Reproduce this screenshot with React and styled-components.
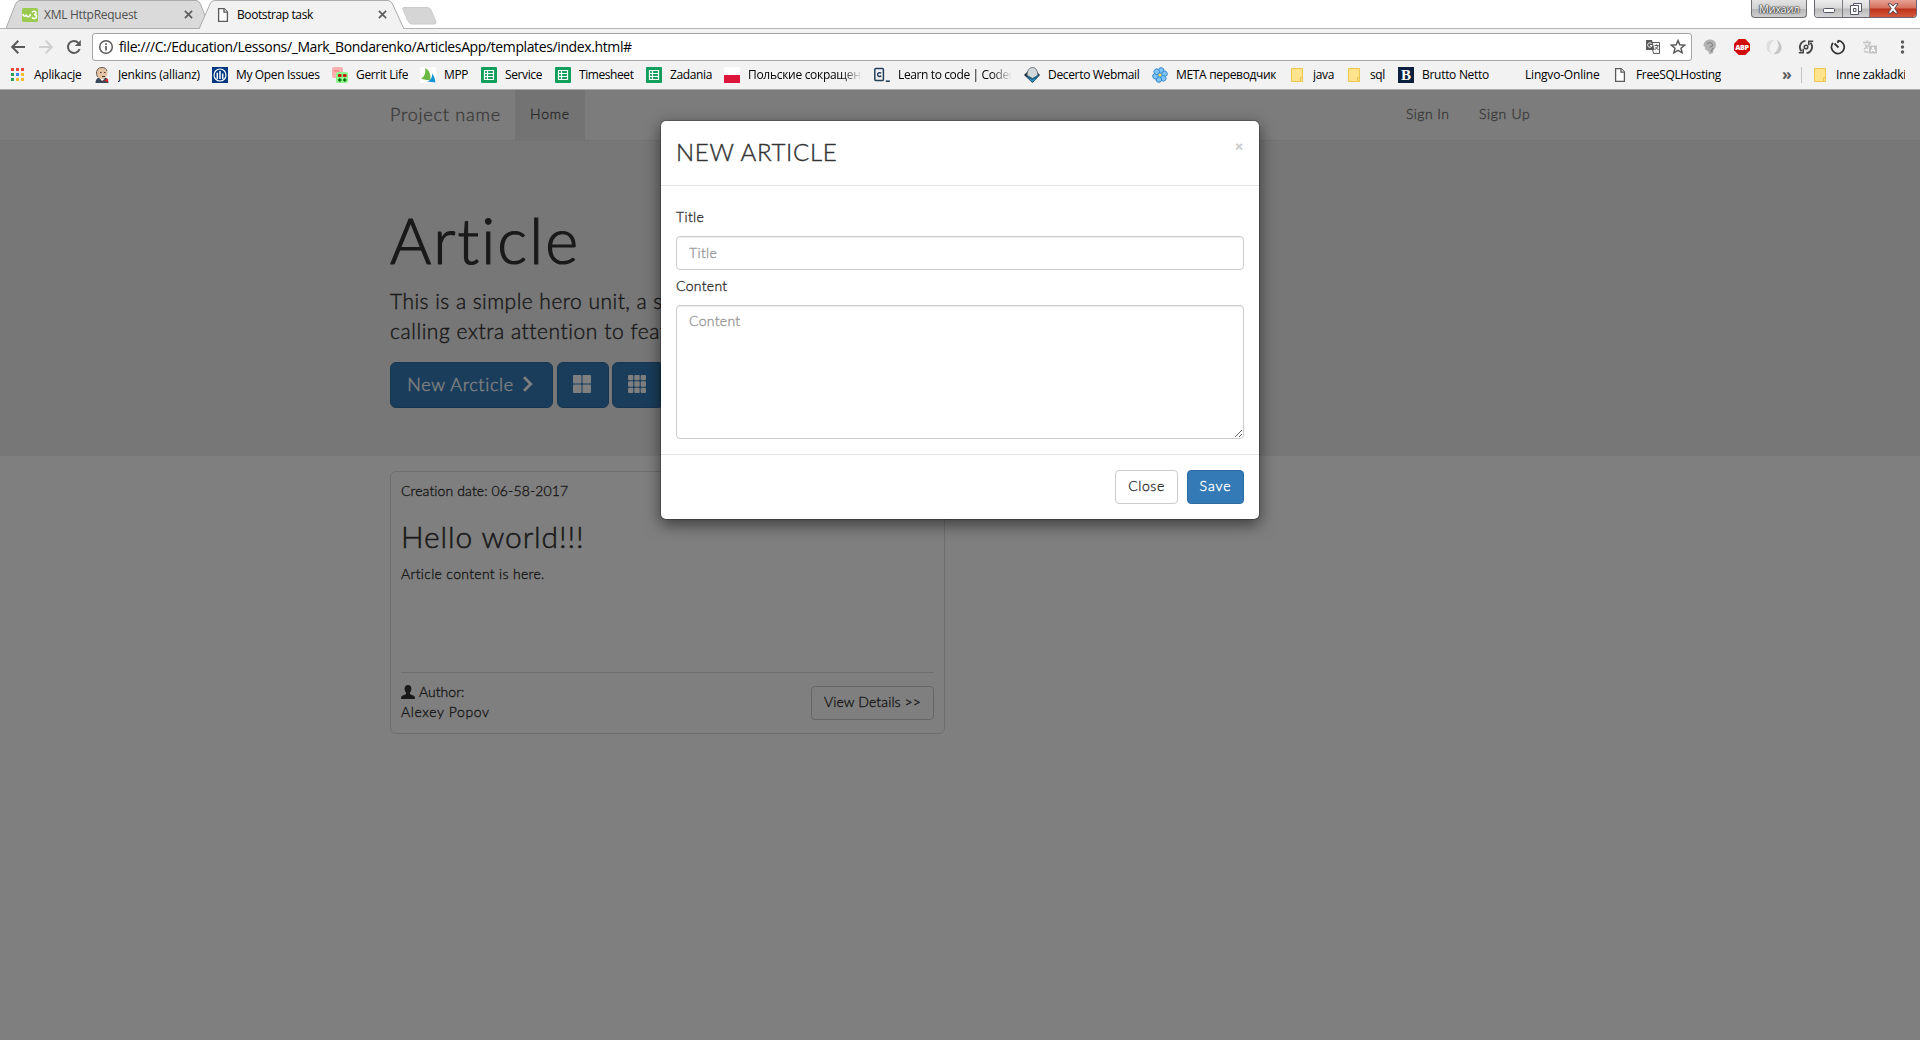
import React from "react";
import styled, { createGlobalStyle, css } from "styled-components";

const Global = createGlobalStyle`
  *, *::before, *::after { box-sizing: border-box; }
  body { margin: 0; background: #fff; overflow: hidden; }
  button, input, textarea { font: inherit; margin: 0; }
  svg { display: block; flex: none; }
`;

const chromeFont = css`font-family: "Open Sans", "Noto Sans", sans-serif;`;
const pageFont = css`font-family: Lato, "Open Sans", sans-serif; font-weight: 300;`;

const Window = styled.div`
  width: 1920px; height: 1040px; display: flex; flex-direction: column; overflow: hidden;
`;

/* ---------- browser chrome ---------- */
const Chrome = styled.header`
  ${chromeFont}
  height: 90px; flex: none; background: #f2f2f2; border-bottom: 1px solid #a9a9a9;
  font-size: 12px; color: #000; display: flex; flex-direction: column;
`;
const TabStrip = styled.div`
  height: 29px; flex: none; background: #fff; border-bottom: 1px solid #b6b6b6;
  display: flex; justify-content: space-between; align-items: flex-start;
`;
const Tabs = styled.div`display: flex; padding-left: 6px;`;
const Tab = styled.div`
  position: relative; isolation: isolate; width: ${p => p.$w}px; height: 29px; flex: none;
  margin-right: -11px; padding: 0 ${p => p.$pr}px 0 16px;
  display: flex; align-items: center; color: ${p => (p.$active ? "#000" : "#505050")};
  z-index: ${p => (p.$active ? 2 : 1)};
`;
const TabShape = styled.svg`position: absolute; left: 0; top: 0; z-index: -1;`;
const TabTitle = styled.span`
  flex: 1; margin-left: ${p => p.$gap}px; letter-spacing: ${p => p.$ls}px; white-space: nowrap;
`;
const NewTab = styled.svg`margin: 7px 0 0 8px;`;
const WindowTools = styled.div`display: flex; padding-right: 3px; gap: 7px;`;
const UserButton = styled.div`
  width: 56px; height: 18px; border: 1px solid #6e6e6e; border-top: 0; border-radius: 0 0 4px 4px;
  background: linear-gradient(#e3e3e3, #d2d2d2 50%, #b7b7b7 52%, #cfcfcf);
  font-size: 11px; line-height: 17px; text-align: center; color: #fff; letter-spacing: -0.3px;
  text-shadow: 0 0 1px #333, 0 0 1px #333, 0 0 2px #444, 0 0 2px #444;
`;
const Controls = styled.div`
  display: flex; height: 18px; border: 1px solid #6b6570; border-top: 0; border-radius: 0 0 4px 4px; overflow: hidden;
`;
const Control = styled.div`
  width: ${p => p.$w}px; display: flex; align-items: center; justify-content: center;
  border-left: ${p => (p.$first ? 0 : "1px solid #7d7a83")};
  background: ${p => p.$close
    ? "linear-gradient(#e6a195, #d4705c 48%, #bd3119 52%, #d4583c)"
    : "linear-gradient(#ececec, #d9d9d9 48%, #b9b9b9 52%, #d4d4d4)"};
  svg { margin-top: ${p => p.$drop || 0}px; }
`;
const Toolbar = styled.div`
  height: 32px; flex: none; padding: 4px 0 0 10px; display: flex; align-items: flex-start;
`;
const NavIcons = styled.div`display: flex; gap: 12px; height: 28px; align-items: center; width: 82px;`;
const Omnibox = styled.div`
  width: 1600px; height: 28px; border: 1px solid #a6a6a6; border-radius: 3px; background: #fff;
  display: flex; align-items: center; padding: 0 5px;
`;
const Url = styled.span`
  flex: 1; margin-left: 5px; font-size: 14px; letter-spacing: -0.383px; white-space: nowrap; padding-bottom: 1px;
`;
const Extensions = styled.div`
  display: flex; height: 28px; align-items: center; margin-left: 10px; gap: 16px;
`;
const Bookmarks = styled.div`
  height: 28px; display: flex; align-items: center; padding: 0 15px 0 10px;
`;
const Bookmark = styled.div`
  width: ${p => p.$w}px; flex: none; display: flex; align-items: center; gap: 8px;
`;
const BookmarkLabel = styled.span`
  white-space: nowrap; overflow: hidden; line-height: 18px; letter-spacing: ${p => p.$ls}px;
  ${p => p.$fade && css`width: 114px; mask-image: linear-gradient(90deg, #000 82%, transparent);`}
`;
const More = styled.span`
  margin-left: auto; width: 19px; font-size: 16px; font-weight: 700; color: #5a5a5a; line-height: 16px; padding-bottom: 3px;
`;
const Divider = styled.span`width: 1px; height: 16px; background: #c3c3c3; margin-right: 10px;`;

/* ---------- page ---------- */
const Page = styled.main`
  ${pageFont}
  position: relative; flex: 1; overflow: hidden; background: #fff; color: #333;
  font-size: 14px; line-height: 20px; -webkit-text-stroke: 0.35px currentColor;
`;
const T = styled.span`letter-spacing: ${p => p.$ls}px; white-space: nowrap;`;
const Navbar = styled.nav`height: 51px; background: #f8f8f8; border-bottom: 1px solid #e7e7e7;`;
const Container = styled.div`width: 1170px; margin: 0 auto; padding: 0 15px;`;
const NavRow = styled(Container)`display: flex; height: 50px; line-height: 48px; color: #777;`;
const Brand = styled.div`font-size: 18px; width: 125px;`;
const NavItem = styled.div`
  padding: 0 15px; background: ${p => (p.$active ? "#e7e7e7" : "none")};
  color: ${p => (p.$active ? "#555" : "#777")}; ${p => p.$w && `width: ${p.$w}px;`}
`;
const NavRight = styled.div`margin-left: auto; display: flex; margin-right: -16px;`;
const Jumbotron = styled.section`height: 315px; background: #eee; padding-top: 64px;`;
const Hero = styled.h1`
  margin: 0; font-size: 63px; font-weight: 300; line-height: 69px; letter-spacing: 2.1px; -webkit-text-stroke: 1.2px currentColor;
`;
const Lead = styled.p`margin: 12px 0 16px; font-size: 21px; line-height: 30px; -webkit-text-stroke: 0.4px currentColor;`;
const HeroButtons = styled.div`display: flex; gap: 4px;`;
const BigButton = styled.button`
  height: 46px; width: ${p => p.$w}px; padding: 0 2px 3px 0; border: 1px solid #2e6da4; border-radius: 6px;
  margin-left: ${p => p.$pull || 0}px;
  background: #337ab7; color: #fff; font-size: 18px; display: flex; align-items: center; justify-content: center; gap: 8px;
  -webkit-text-stroke: 0.4px currentColor;
`;
const Card = styled.article`
  width: 555px; height: 263px; margin-top: 15px; padding: 9px 10px 10px; border: 1px solid #ddd; border-radius: 6px;
  display: flex; flex-direction: column;
`;
const CardTitle = styled.h2`
  margin: 19px 0 11px; font-size: 30px; font-weight: 300; line-height: 33px; letter-spacing: 0.85px; -webkit-text-stroke: 0.5px currentColor;
`;
const CardBody = styled.div`flex: 1;`;
const CardFooter = styled.footer`
  height: 51px; border-top: 1px solid #ddd; padding-top: 9px; display: flex; justify-content: space-between;
`;
const Author = styled.div`display: flex; flex-direction: column;`;
const AuthorRow = styled.div`display: flex; gap: 4px; height: 20px; svg { margin-top: 3px; }`;
const Button = styled.button`
  height: 34px; width: ${p => p.$w}px; margin-top: ${p => p.$mt || 0}px; padding: 0 0 2px; border-radius: 4px; line-height: 20px;
  border: 1px solid ${p => (p.$primary ? "#2e6da4" : "#ccc")};
  background: ${p => (p.$primary ? "#337ab7" : "#fff")}; color: ${p => (p.$primary ? "#fff" : "#333")};
  -webkit-text-stroke: 0.35px currentColor;
`;

/* ---------- modal ---------- */
const Backdrop = styled.div`position: absolute; inset: 0; background: rgba(0, 0, 0, 0.5);`;
const Overlay = styled.div`
  position: absolute; inset: 0; display: flex; justify-content: center; align-items: flex-start; padding-top: 30px;
`;
const Dialog = styled.div`
  width: 600px; height: 400px; border: 1px solid rgba(0, 0, 0, 0.2); border-radius: 6px; background: #fff;
  background-clip: padding-box; box-shadow: 0 5px 15px rgba(0, 0, 0, 0.5);
`;
const DialogHeader = styled.div`
  height: 65px; border-bottom: 1px solid #e5e5e5; padding: 14px 15px; display: flex; justify-content: space-between;
`;
const DialogTitle = styled.h3`
  margin: 0; font-size: 24px; font-weight: 300; line-height: 33px; letter-spacing: 0.7px; -webkit-text-stroke: 0.4px currentColor;
`;
const CloseX = styled.span`
  font-size: 14px; font-weight: 900; color: #ccc; line-height: 21px; margin-right: 1px; -webkit-text-stroke: 0.3px #ccc;
`;
const DialogBody = styled.form`height: 268px; padding: 21px 15px 15px; display: flex; flex-direction: column;`;
const Label = styled.label`height: 20px; margin-bottom: 9px; letter-spacing: ${p => p.$ls}px;`;
const field = css`
  width: 568px; border: 1px solid #ccc; border-radius: 4px; padding: 5px 12px 7px; background: #fff; outline: 0;
  box-shadow: inset 0 1px 1px rgba(0, 0, 0, 0.075); color: #555; line-height: 20px; letter-spacing: ${p => p.$ls}px;
  &::placeholder { color: #999; opacity: 1; }
`;
const Input = styled.input`${field} height: 34px; margin-bottom: 6px;`;
const TextArea = styled.textarea`${field} height: 134px; resize: vertical; display: block;`;
const DialogFooter = styled.div`
  border-top: 1px solid #e5e5e5; padding: 15px; display: flex; justify-content: flex-end; gap: 9px;
`;

/* ---------- icons ---------- */
const FileIcon = () => (
  <svg width="16" height="16" viewBox="0 0 16 16" fill="#fff" stroke="#5a5a5a" strokeWidth="1.3">
    <path d="M3.6 1.6h5.6l3.2 3.4v9.4H3.6z" /><path d="M9 1.8v3.4h3.3" />
  </svg>
);
const CloseIcon = () => (
  <svg width="9" height="9" viewBox="0 0 10 10" stroke="#5e5e5e" strokeWidth="1.9"><path d="M1 1l8 8M9 1L1 9" /></svg>
);
const W3Icon = () => (
  <svg width="16" height="14" viewBox="0 0 16 14"><rect width="16" height="14" rx="1.5" fill="#9acb4e" />
    <path d="M.8 6c.8 3 2.800 3 3.400.6.700 2.800 3.300 3 4.500-.6M10 4.300c1-1.800 4-1.300 4 .5 0 1.200-1 1.700-2 1.700 1.500 0 2.500.8 2.500 2.200 0 2-3.500 2.600-4.500.6" fill="none" stroke="#fff" strokeWidth="1.500" /></svg>
);
const BackIcon = ({ c, flip }) => (
  <svg width="16" height="16" viewBox="0 0 16 16" fill="none" stroke={c} strokeWidth="2" transform={flip ? "scale(-1 1)" : undefined}>
    <path d="M15 8H2.500M8.300 1.800L2.200 8l6.100 6.200" />
  </svg>
);
const ReloadIcon = () => (
  <svg width="16" height="16" viewBox="0 0 16 16" fill="none" stroke="#5a5a5a" strokeWidth="2">
    <path d="M13.600 10A6 6 0 1 1 12.400 3.900" /><path d="M14.800 1v6H8.800z" fill="#5a5a5a" stroke="none" />
  </svg>
);
const InfoIcon = () => (
  <svg width="16" height="16" viewBox="0 0 16 16" fill="none" stroke="#5a5a5a"><circle cx="8" cy="8" r="6.300" strokeWidth="1.500" />
    <path d="M8 7v4.500M8 4.300v1.600" strokeWidth="1.700" /></svg>
);
const TranslateIcon = ({ c = "#5a5a5a" }) => (
  <svg width="16" height="16" viewBox="0 0 16 16">
    <path d="M6 3.500h8.500v11H8.500z" fill="#f5f5f5" stroke={c} />
    <path d="M1 1h6l2.600 10H1z" fill={c} />
    <path d="M6.600 4.700A2.200 2.200 0 1 0 7 6.500H5" fill="none" stroke="#fff" />
    <path d="M9.500 6.500h4M11.500 5.500v1M13 6.500c-.5 2-1.500 3-3 4M10.500 8l3 3" fill="none" stroke={c} />
  </svg>
);
const StarIcon = () => (
  <svg width="16" height="16" viewBox="0 0 16 16" fill="none" stroke="#5a5a5a" strokeWidth="1.500">
    <path d="M8 1.500l1.800 4.300 4.700.4-3.500 3 1.100 4.600L8 11.400l-4.100 2.400L5 9.200l-3.500-3 4.700-.4z" />
  </svg>
);
const HeadIcon = () => (
  <svg width="16" height="16" viewBox="0 0 16 16"><path d="M8 .5c4 0 6 2.500 6 5.500 0 2.500-1.500 4-2.500 5l-.5 3-3.500 1.500L6 12 3 10.500l.3-2L1.500 7C1.800 3 4 .5 8 .5z" fill="#b3b3b3" />
    <path d="M5 5c1-2 5-2 5.500.5.3 1.500-1 2.500-3 2.500M11 9l-2 4" fill="none" stroke="#878787" strokeWidth="1.200" /></svg>
);
const AbpIcon = () => (
  <svg width="16" height="16" viewBox="0 0 16 16"><path d="M4.700 0h6.600L16 4.700v6.600L11.300 16H4.700L0 11.300V4.700z" fill="#d10a0a" />
    <text x="8" y="10.700" fontFamily="Open Sans" fontSize="7.200" fontWeight="800" fill="#fff" textAnchor="middle" letterSpacing="-.3">ABP</text></svg>
);
const SwirlIcon = () => (
  <svg width="16" height="16" viewBox="0 0 16 16"><path d="M8.500 .8C3 0 0 4 .5 8.500 1 12 3 14 5.500 15 3.500 12 3 10 4 7c.8-2.500 2.500-4 4.500-6.200z" fill="#dedede" />
    <path d="M7.500 15.200C13 16 16 12 15.500 7.500 15 4 13 2 10.500 1c2 3 2.500 5 1.500 8-.8 2.500-2.500 4-4.500 6.200z" fill="#c6c6c6" /></svg>
);
const SyncIcon = () => (
  <svg width="16" height="16" viewBox="0 0 16 16" fill="none" stroke="#484848" strokeWidth="1.900">
    <path d="M7.500 1.900A6.200 6.200 0 0 0 3.600 12.300M8.500 14.100A6.200 6.200 0 0 0 12.400 3.700" />
    <path d="M.8 13.700h4.400V9.800M15.200 2.300h-4.400v3.900" strokeWidth="1.600" /><circle cx="8" cy="8" r="1.800" strokeWidth="1.500" />
  </svg>
);
const ClockIcon = () => (
  <svg width="16" height="16" viewBox="0 0 16 16" fill="none" stroke="#333"><path d="M8 1.500V4M8 1.700A6.400 6.400 0 1 1 3 3.900" strokeWidth="1.700" />
    <path d="M4.500 4.500L8.500 8.500" strokeWidth="1.800" /></svg>
);
const GrayTranslate = () => (
  <svg width="16" height="16" viewBox="0 0 16 16" fill="none" stroke="#c4c4c4" strokeWidth="1.400"><path d="M1 3.500h8M5 1.500v2M8 3.500c-1 3.500-3 5-6 6.500M3 5.500l3 4M2.500 12.500v-1M2.500 13h4" />
    <rect x="7" y="6.500" width="8" height="8" fill="#c4c4c4" stroke="none" /><path d="M9 13l2-5 2 5M9.700 11.500h2.600" stroke="#fff" strokeWidth="1" /></svg>
);
const DotsIcon = () => (
  <svg width="16" height="16" viewBox="0 0 16 16" fill="#5a5a5a"><circle cx="8.500" cy="3" r="1.700" /><circle cx="8.500" cy="8" r="1.700" /><circle cx="8.500" cy="13" r="1.700" /></svg>
);
const AppsIcon = () => {
  const colors = ["#e8453c", "#e8453c", "#e8453c", "#2f9e58", "#4285f4", "#f9bb2d", "#2f9e58", "#f9bb2d", "#f9bb2d"];
  return (
    <svg width="16" height="16" viewBox="0 0 16 16">
      {colors.map((c, i) => <rect key={i} x={1 + (i % 3) * 5} y={1 + Math.floor(i / 3) * 5} width="3" height="3" fill={c} />)}
    </svg>
  );
};
const JenkinsIcon = () => (
  <svg width="16" height="16" viewBox="0 0 16 16"><path d="M1.500 16c0-3 1.500-5.500 4-5.500h5c2.500 0 4 2.500 4 5.500z" fill="#39495a" />
    <path d="M5.500 11l2.500 3 3-2.500z" fill="#fff" /><ellipse cx="8" cy="6" rx="5.500" ry="6" fill="#e3c3a3" /><path d="M3.500 10C.8 4 4 .5 8 .5c2.500 0 4.500 1 5 3.500" fill="none" stroke="#6b5a50" />
    <path d="M6 5.500h1.500M10 5.500h1.500M8 9.500h3" stroke="#4b3a30" /><path d="M8 14.500l2-1.500 4 2.500v-4l-4 2z" fill="#d22" /></svg>
);
const AllianzIcon = () => (
  <svg width="16" height="16" viewBox="0 0 16 16" fill="none" stroke="#fff"><rect width="16" height="16" fill="#003781" stroke="none" />
    <circle cx="8" cy="8" r="6" strokeWidth="1.200" /><path d="M8 4v8M5.300 12V6.500H4.500M10.700 12V6.500" strokeWidth="1.500" /></svg>
);
const GerritIcon = () => (
  <svg width="16" height="16" viewBox="0 0 16 16"><rect width="11" height="11" rx="2" fill="#ffb0b0" /><path d="M2 4h5" stroke="#ff8f8f" strokeWidth="2" />
    <rect x="4" y="5" width="12" height="11" rx="2" fill="#8dfc8d" /><path d="M6 8.500h3.500M11 8.500h3.500" stroke="#c00" strokeWidth="2.400" />
    <path d="M6 13h3.500M11 13h3.500M7.700 11.300v3.400M12.700 11.300v3.400" stroke="#0a6b0a" strokeWidth="1.500" /></svg>
);
const MppIcon = () => (
  <svg width="16" height="16" viewBox="0 0 16 16"><rect width="16" height="16" fill="#fff" />
    <path d="M5 1c3.500 1.500 6 5 5.500 11.500C8 13.500 5 13 1 11.500 4.500 10 6 6 5 1z" fill="#6cb944" />
    <path d="M12 6.500c2 2 3 5 3.500 9-3.500-.5-6-.5-8.500-1 3.500-1 5.500-4 5-8z" fill="#1596d4" /></svg>
);
const SheetIcon = () => (
  <svg width="16" height="16" viewBox="0 0 16 16"><rect width="16" height="16" rx="1" fill="#129f5c" />
    <path d="M3.500 3.500h9v9h-9zM3.500 6.500h9M3.500 9.500h9M6.500 3.500v9" fill="none" stroke="#fff" strokeWidth="1.200" /></svg>
);
const FlagIcon = () => (
  <svg width="16" height="16" viewBox="0 0 16 16"><rect width="16" height="8" fill="#fff" /><rect y="8" width="16" height="8" fill="#dc143c" /></svg>
);
const CodecademyIcon = () => (
  <svg width="16" height="16" viewBox="0 0 16 16" fill="none" stroke="#22405a"><rect x=".8" y="1.600" width="8.600" height="12" rx="1" strokeWidth="1.500" />
    <path d="M7.200 6.300c-1-1-3.600-.8-3.600 1.300s2.600 2.300 3.600 1.200" strokeWidth="1.500" /><path d="M11.800 14.200h4" strokeWidth="1.600" /></svg>
);
const WebmailIcon = () => (
  <svg width="16" height="16" viewBox="0 0 16 16"><path d="M0 8l3-3h10l3 3-7.500 8z" fill="#1f2c33" /><path d="M1.500 9l6.500 3.500L13 11l-4.500 4.300z" fill="#2f93c8" />
    <path d="M3 8.500C3 3.500 5.500.5 8.500.5S13.500 3 14 8.500L8.500 11.500z" fill="#d3d8da" stroke="#59636a" strokeWidth=".9" /><path d="M1.500 7.500L8.500 11.500 14.500 7.500 14 10l-5.500 2.800z" fill="#1d6d9c" /></svg>
);
const FlowerIcon = () => (
  <svg width="16" height="16" viewBox="0 0 16 16" fill="#7cc4fa" stroke="#1e74c0" strokeWidth=".7">
    {[0, 60, 120, 180, 240, 300].map(a => <circle key={a} cx="8" cy="3.300" r="2.800" transform={`rotate(${a + 15} 8 8)`} />)}
    <circle cx="8" cy="8" r="1.800" fill="#ffe14a" stroke="#3f8fd4" />
  </svg>
);
const FolderIcon = () => (
  <svg width="16" height="16" viewBox="0 0 16 16" fill="#ffe48d" stroke="#ecc54e"><path d="M2.500 1.500h11v13h-11z" /><path d="M11.500 10.500h2v4h-2z" /></svg>
);
const BIcon = () => (
  <svg width="16" height="16" viewBox="0 0 16 16"><rect width="16" height="16" fill="#0c1f3f" />
    <text x="8" y="13" fontFamily="Liberation Serif" fontSize="15" fontWeight="700" fill="#fff" textAnchor="middle">B</text></svg>
);
const BlankIcon = () => <svg width="16" height="16" />;
const ChevronIcon = () => (
  <svg width="12" height="16" viewBox="0 0 12 16" fill="none" stroke="currentColor" strokeWidth="2.700"><path d="M2 1.300L8.800 8 2 14.700" /></svg>
);
const GridIcon = ({ n }) => {
  const gap = 1, s = (18 - gap * (n - 1)) / n;
  return (
    <svg width="18" height="18" viewBox="0 0 18 18" fill="currentColor">
      {Array.from({ length: n * n }, (_, i) => <rect key={i} x={(i % n) * (s + gap)} y={Math.floor(i / n) * (s + gap)} width={s} height={s} rx="1" />)}
    </svg>
  );
};
const UserIcon = () => (
  <svg width="14" height="14" viewBox="0 0 14 14" fill="#333"><path d="M7 0c2.200 0 3.400 1.500 3.400 3.800 0 1.800-.7 3-1.500 3.900v1.200c1.500.9 4.100 1.500 4.700 2.500.3.600.4 1.500.4 2.600H0c0-1.100.1-2 .4-2.600.6-1 3.200-1.600 4.700-2.500V7.700c-.8-.9-1.500-2.100-1.500-3.900C3.600 1.500 4.800 0 7 0z" /></svg>
);

const bookmarks = [
  [AppsIcon, "Aplikacje", 84, -0.22], [JenkinsIcon, "Jenkins (allianz)", 118, -0.2], [AllianzIcon, "My Open Issues", 120, -0.35],
  [GerritIcon, "Gerrit Life", 88, -0.34], [MppIcon, "MPP", 61, -0.41], [SheetIcon, "Service", 74, -0.39],
  [SheetIcon, "Timesheet", 91, -0.42], [SheetIcon, "Zadania", 78, -0.37], [FlagIcon, "Польские сокращения", 150, -0.3, true],
  [CodecademyIcon, "Learn to code | Codecademy", 150, -0.38, true], [WebmailIcon, "Decerto Webmail", 128, -0.33],
  [FlowerIcon, "МЕТА переводчик", 137, -0.33], [FolderIcon, "java", 57, -0.34], [FolderIcon, "sql", 52, -0.36],
  [BIcon, "Brutto Netto", 103, -0.29], [BlankIcon, "Lingvo-Online", 111, -0.2], [FileIcon, "FreeSQLHosting", 120, -0.34],
];

export default function App() {
  return (
    <Window>
      <Global />
      <Chrome>
        <TabStrip>
          <Tabs>
            <Tab $w={204} $pr={17}>
              <TabShape width="204" height="29" viewBox="0 0 204 29"><path d="M0 28.500L9.500 4Q11 .5 14 .5H190Q193 .5 194.500 4L204 28.500z" fill="#dadada" stroke="#acacac" /></TabShape>
              <W3Icon /><TabTitle $gap={6} $ls={-0.27}>XML HttpRequest</TabTitle><CloseIcon />
            </Tab>
            <Tab $w={206} $active $pr={18}>
              <TabShape width="206" height="29" viewBox="0 0 206 29"><path d="M0 29L11 4Q12.500.5 15.500.5H189Q192 .5 193.500 4L205 29" fill="#f2f2f2" stroke="#acacac" /></TabShape>
              <FileIcon /><TabTitle $gap={6} $ls={-0.4}>Bootstrap task</TabTitle><CloseIcon />
            </Tab>
            <NewTab width="35" height="18" viewBox="0 0 35 18"><path d="M2 .5H25Q28 .5 29 3l5 12q.5 2-1.500 2H10Q7.500 17 6.500 15L1 2.500Q.3.500 2 .5z" fill="#d5d5d5" stroke="#cbcbcb" /></NewTab>
          </Tabs>
          <WindowTools>
            <UserButton>Михаил</UserButton>
            <Controls>
              <Control $w={27} $first $drop={3}><svg width="12" height="5"><rect x=".5" y=".5" width="11" height="4" rx="1" fill="#fff" stroke="#555568" /></svg></Control>
              <Control $w={27}><svg width="12" height="12" viewBox="0 0 12 12" fill="#fff" stroke="#555568"><path d="M3.500.5h8v8h-8z" /><path d="M.5 2.500h8v9h-8z" /><path d="M3.500 5.500h2.500v3h-2.500z" /></svg></Control>
              <Control $w={47} $close><svg width="12" height="11" viewBox="0 0 12 11"><path d="M1 .8h3L6 3.200 8 .8h3L7.700 5.500 11 10.200H8L6 7.800 4 10.200H1L4.300 5.500z" fill="#fff" stroke="#5c4a58" /></svg></Control>
            </Controls>
          </WindowTools>
        </TabStrip>
        <Toolbar>
          <NavIcons><BackIcon c="#5a5a5a" /><BackIcon c="#d0d0d0" flip /><ReloadIcon /></NavIcons>
          <Omnibox>
            <InfoIcon />
            <Url>file:///C:/Education/Lessons/_Mark_Bondarenko/ArticlesApp/templates/index.html#</Url>
            <TranslateIcon /><svg width="9" height="1" /><StarIcon />
          </Omnibox>
          <Extensions><HeadIcon /><AbpIcon /><SwirlIcon /><SyncIcon /><ClockIcon /><GrayTranslate /><DotsIcon /></Extensions>
        </Toolbar>
        <Bookmarks>
          {bookmarks.map(([Icon, label, w, ls, fade], i) => (
            <Bookmark key={i} $w={w}><Icon /><BookmarkLabel $ls={ls} $fade={fade}>{label}</BookmarkLabel></Bookmark>
          ))}
          <More>»</More><Divider />
          <Bookmark $w={93}><FolderIcon /><BookmarkLabel $ls={-0.22}>Inne zakładki</BookmarkLabel></Bookmark>
        </Bookmarks>
      </Chrome>

      <Page>
        <Navbar>
          <NavRow>
            <Brand><T $ls={0.78}>Project name</T></Brand>
            <NavItem $active $w={70}><T $ls={0.8}>Home</T></NavItem>
            <NavRight>
              <NavItem $w={73}><T $ls={0.42}>Sign In</T></NavItem>
              <NavItem $w={82}><T $ls={0.65}>Sign Up</T></NavItem>
            </NavRight>
          </NavRow>
        </Navbar>
        <Jumbotron>
          <Container>
            <Hero>Article</Hero>
            <Lead>
              <T $ls={0.47}>This is a simple hero unit, a simple jumbotron-style component for</T><br />
              <T $ls={0.57}>calling extra attention to featured content or information.</T>
            </Lead>
            <HeroButtons>
              <BigButton $w={163}><T $ls={0.68}>New Arcticle</T><ChevronIcon /></BigButton>
              <BigButton $w={52}><GridIcon n={2} /></BigButton>
              <BigButton $w={52} $pull={-1}><GridIcon n={3} /></BigButton>
            </HeroButtons>
          </Container>
        </Jumbotron>
        <Container>
          <Card>
            <CardBody>
              <T $ls={0.12}>Creation date: 06-58-2017</T>
              <CardTitle>Hello world!!!</CardTitle>
              <T $ls={0.32}>Article content is here.</T>
            </CardBody>
            <CardFooter>
              <Author>
                <AuthorRow><UserIcon /><T $ls={0.03}>Author:</T></AuthorRow>
                <T $ls={0.62}>Alexey Popov</T>
              </Author>
              <Button $w={123} $mt={4}><T $ls={0.12}>View Details &gt;&gt;</T></Button>
            </CardFooter>
          </Card>
        </Container>

        <Backdrop />
        <Overlay>
          <Dialog role="dialog">
            <DialogHeader><DialogTitle>NEW ARTICLE</DialogTitle><CloseX>×</CloseX></DialogHeader>
            <DialogBody>
              <Label $ls={0.35}>Title</Label>
              <Input $ls={0.35} placeholder="Title" />
              <Label $ls={0.32}>Content</Label>
              <TextArea $ls={0.32} placeholder="Content" />
            </DialogBody>
            <DialogFooter>
              <Button $w={63}><T $ls={0.6}>Close</T></Button>
              <Button $w={57} $primary><T $ls={0.9}>Save</T></Button>
            </DialogFooter>
          </Dialog>
        </Overlay>
      </Page>
    </Window>
  );
}
